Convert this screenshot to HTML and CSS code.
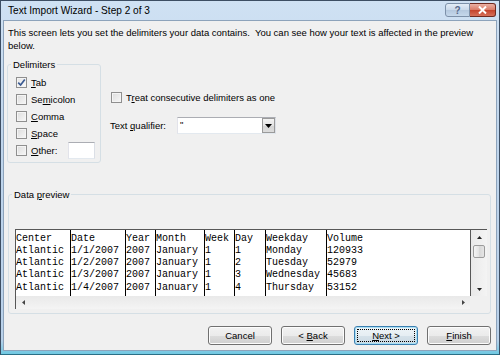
FILE: index.html
```html
<!DOCTYPE html>
<html lang="en">
<head>
  <meta charset="UTF-8">
  <title>Text Import Wizard - Step 2 of 3</title>
  <link rel="stylesheet" href="styles.css">
</head>
<body>
  <div class="window">
    <div class="titlebar">
      <span class="title">Text Import Wizard - Step 2 of 3</span>
      <div class="caption-btns">
        <span class="cap-help">?</span>
        <span class="cap-close">
          <svg width="9" height="8" viewBox="0 0 9 8"><path d="M1 0.5 L8 7.5 M8 0.5 L1 7.5" stroke="#fff" stroke-width="2"/></svg>
        </span>
      </div>
    </div>

    <div class="body">
      <p class="intro">This screen lets you set the delimiters your data contains.&nbsp; You can see how your text is affected in the preview<br>below.</p>

      <div class="options">
        <fieldset class="group delims">
          <legend>Delimiters</legend>
          <div class="delims-list">
            <div class="check">
              <span class="box checked"><svg width="9" height="9" viewBox="0 0 9 9"><path d="M1.2 4.6 L3.6 7 L7.8 1.4" fill="none" stroke="#3a5a92" stroke-width="1.7"/></svg></span>
              <span><u>T</u>ab</span>
            </div>
            <div class="check"><span class="box"></span><span>Se<u>m</u>icolon</span></div>
            <div class="check"><span class="box"></span><span><u>C</u>omma</span></div>
            <div class="check"><span class="box"></span><span><u>S</u>pace</span></div>
            <div class="check">
              <span class="box"></span><span><u>O</u>ther:</span>
              <span class="textbox other-box"></span>
            </div>
          </div>
        </fieldset>

        <div class="opts-right">
          <div class="check"><span class="box"></span><span>T<u>r</u>eat consecutive delimiters as one</span></div>
          <div class="qualifier">
            <span class="qual-label">Text <u>q</u>ualifier:</span>
            <div class="textbox combo">
              <span class="combo-value">"</span>
              <span class="combo-btn"><svg width="7" height="4" viewBox="0 0 7 4"><path d="M0 0 H7 L3.5 4 Z" fill="#000"/></svg></span>
            </div>
          </div>
        </div>
      </div>

      <fieldset class="group preview">
        <legend>Data <u>p</u>review</legend>
        <div class="preview-inner">
          <div class="grid-ctl">
            <div class="cols">
              <div class="col c1">Center
Atlantic
Atlantic
Atlantic
Atlantic</div>
              <div class="col c2">Date
1/1/2007
1/2/2007
1/3/2007
1/4/2007</div>
              <div class="col c3">Year
2007
2007
2007
2007</div>
              <div class="col c4">Month
January
January
January
January</div>
              <div class="col c5">Week
1
1
1
1</div>
              <div class="col c6">Day
1
2
3
4</div>
              <div class="col c7">Weekday
Monday
Tuesday
Wednesday
Thursday</div>
              <div class="col c8">Volume
120933
52979
45683
53152</div>
            </div>
            <div class="vscroll">
              <span class="arrow"><svg width="5" height="3" viewBox="0 0 5 3"><path d="M0 3 H5 L2.5 0 Z" fill="#222"/></svg></span>
              <span class="thumb"></span>
              <span class="track"></span>
              <span class="arrow"><svg width="5" height="3" viewBox="0 0 5 3"><path d="M0 0 H5 L2.5 3 Z" fill="#222"/></svg></span>
            </div>
            <div class="hscroll">
              <span class="arrow"><svg width="3" height="5" viewBox="0 0 3 5"><path d="M3 0 V5 L0 2.5 Z" fill="#444"/></svg></span>
              <span class="track"></span>
              <span class="arrow"><svg width="3" height="5" viewBox="0 0 3 5"><path d="M0 0 V5 L3 2.5 Z" fill="#444"/></svg></span>
            </div>
            <div class="corner"></div>
          </div>
        </div>
      </fieldset>

      <div class="buttons">
        <button class="btn">Cancel</button>
        <button class="btn">&lt; <u>B</u>ack</button>
        <button class="btn default"><span class="focus"><u>N</u>ext &gt;</span></button>
        <button class="btn"><u>F</u>inish</button>
      </div>
    </div>
  </div>
</body>
</html>
```

FILE: styles.css
```css
* {
  box-sizing: border-box;
}
body {
  margin: 0;
  font-family: 'Liberation Sans', Arial, sans-serif;
  font-size: 9.5px;
  color: #000;
  background: #fff;
}
u {
  text-decoration-thickness: 1px;
  text-underline-offset: 1px;
}
.window {
  width: 500px;
  height: 355px;
  display: flex;
  flex-direction: column;
  border: 1px solid #3d4e63;
  border-bottom-color: #2a6f86;
  padding: 0 2px 3px;
  background: linear-gradient(#cfe1f3, #bfd5ec 40%, #b9d1ea 96%, #6fc8e2);
}
.titlebar {
  height: 19px;
  display: flex;
  justify-content: space-between;
  align-items: flex-start;
  padding: 0 1px 0 5px;
}
.title {
  font-size: 10.1px;
  line-height: 19px;
}
.caption-btns {
  display: flex;
  margin-top: 2px;
}
.cap-help, .cap-close {
  height: 14px;
  display: flex;
  align-items: center;
  justify-content: center;
}
.cap-help {
  width: 25px;
  border: 1px solid #7d91a9;
  border-radius: 3px 0 0 3px;
  background: linear-gradient(#e3edf7, #c9d9ea 50%, #b4c8de 51%, #c5d8eb);
  color: #56688a;
  font-size: 10px;
  font-weight: bold;
}
.cap-close {
  width: 26px;
  border: 1px solid #6f2a20;
  border-left: none;
  border-radius: 0 3px 3px 0;
  background: linear-gradient(#eab1a4, #d97a66 50%, #c3422b 51%, #d6705a);
}
.body {
  flex: 1;
  display: flex;
  flex-direction: column;
  background: #f0f0f0;
  border: 1px solid #8da3bb;
  padding: 4.5px 5px 5px 3px;
}
.intro {
  margin: 0 0 0 1px;
  line-height: 13px;
}
.options {
  display: flex;
  align-items: flex-start;
  margin-top: 6px;
}
.group {
  margin: 0;
  padding: 0;
  border: 1px solid #d5dfe5;
  border-radius: 3px;
  min-width: 0;
}
.group legend {
  line-height: 13px;
  padding: 0 2px;
  margin-left: 3px;
}
.delims {
  width: 94px;
}
.delims-list {
  padding: 3.5px 0 3px 8px;
}
.check {
  height: 17px;
  display: flex;
  align-items: center;
}
.box {
  width: 11px;
  height: 11px;
  margin-right: 4px;
  border: 1px solid #8f8f8f;
  background: linear-gradient(135deg, #dcdcdc, #f7f7f7);
  box-shadow: inset 0 0 0 1px #f4f4f4;
  display: flex;
  align-items: center;
  justify-content: center;
}
.box.checked {
  background: linear-gradient(135deg, #e4e4e4, #fafafa);
}
.textbox {
  background: #fff;
  border: 1px solid #abadb3;
  border-right-color: #dbdfe6;
  border-bottom-color: #e3e9ef;
  border-left-color: #e2e3ea;
}
.other-box {
  width: 27px;
  height: 17px;
  margin-left: 11px;
}
.opts-right {
  margin-left: 10px;
  padding-top: 31px;
}
.qualifier {
  display: flex;
  align-items: center;
  margin-top: 11.5px;
}
.qual-label {
  width: 67px;
  margin-left: -1px;
}
.combo {
  width: 99px;
  height: 17px;
  display: flex;
  justify-content: space-between;
  padding: 0 0 0 2px;
}
.combo-value {
  line-height: 14px;
}
.combo-btn {
  width: 13px;
  margin: 0;
  border: 1px solid #9a9a9a;
  background: linear-gradient(#f3f3f3, #e4e4e4 50%, #d4d4d4 51%, #dcdcdc);
  display: flex;
  align-items: center;
  justify-content: center;
}
.preview {
  margin: 24.5px 0 0 1px;
}
.preview-inner {
  padding: 28.5px 3px 4px 6px;
}
.grid-ctl {
  height: 80px;
  display: grid;
  grid-template-columns: 1fr 17px;
  grid-template-rows: 66px 13px;
  border-top: 1px solid #575757;
  border-left: 1px solid #575757;
  background: #fff;
}
.cols {
  display: flex;
  overflow: hidden;
  font-family: 'Liberation Mono', 'Courier New', monospace;
  font-size: 10px;
}
.col {
  white-space: pre;
  line-height: 12.25px;
  padding-top: 2.5px;
  border-left: 1px solid #000;
  flex: none;
  overflow: hidden;
}
.c1 { width: 54px; border-left: none; }
.c2 { width: 55px; }
.c3 { width: 30px; }
.c4 { width: 49px; }
.c5 { width: 30px; }
.c6 { width: 31px; }
.c7 { width: 61px; }
.c8 { flex: 1; }
.vscroll {
  display: flex;
  flex-direction: column;
  border-left: 1px solid #575757;
  background: linear-gradient(to right, #e9e9e9, #f4f4f4);
}
.vscroll .arrow {
  height: 14px;
  display: flex;
  align-items: center;
  justify-content: center;
}
.thumb {
  height: 13px;
  margin: 1px 2px 0 2px;
  border: 1px solid #9c9c9c;
  border-radius: 2px;
  background: linear-gradient(to right, #f4f4f4, #e2e2e2 50%, #d6d6d6 51%, #e6e6e6);
}
.track {
  flex: 1;
}
.hscroll {
  display: flex;
  background: linear-gradient(#e9e9e9, #f4f4f4);
}
.hscroll .arrow {
  width: 14px;
  display: flex;
  align-items: center;
  justify-content: center;
}
.corner {
  background: #f0f0f0;
}
.buttons {
  margin-top: auto;
  display: flex;
  justify-content: flex-end;
  gap: 9px;
}
.btn {
  width: 64px;
  height: 19px;
  padding: 0;
  font-family: inherit;
  font-size: 9.5px;
  color: #000;
  border: 1px solid #707070;
  border-radius: 3px;
  background: linear-gradient(#f2f2f2, #ebebeb 50%, #dddddd 51%, #cfcfcf);
  box-shadow: inset 0 0 0 1px #fcfcfc;
}
.btn.default {
  border-color: #3c7fb1;
  box-shadow: inset 0 0 0 1px #a9dff3;
  background: linear-gradient(#eef4f8, #e6eef3 50%, #d6e2ea 51%, #cbd9e3);
  padding: 2px;
}
.focus {
  display: flex;
  align-items: center;
  justify-content: center;
  height: 100%;
  border: 1px dotted #000;
}
```
